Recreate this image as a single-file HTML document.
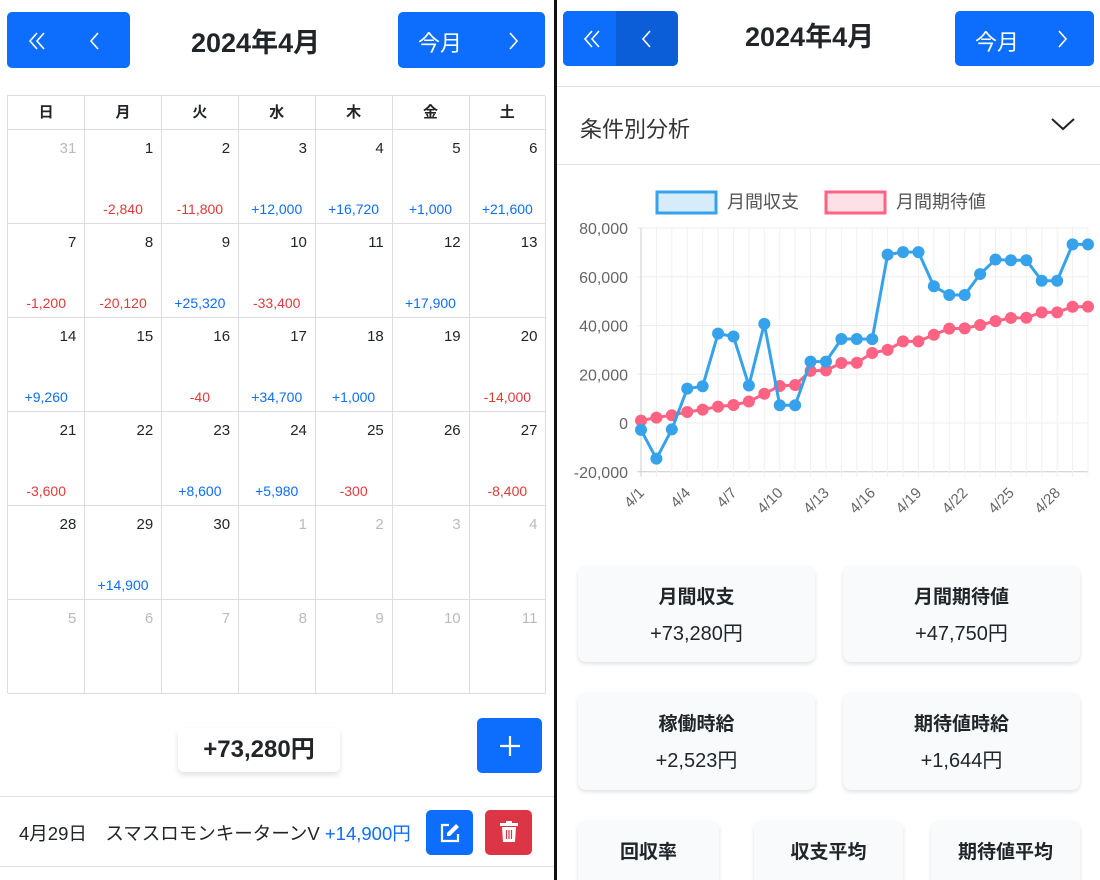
<!DOCTYPE html>
<html><head><meta charset="utf-8">
<style>
*{box-sizing:border-box;margin:0;padding:0}
html,body{width:1100px;height:880px;overflow:hidden}
body{background:#fff;font-family:"Liberation Sans","Noto Sans CJK JP",sans-serif;color:#212529;position:relative}
.a{position:absolute}
.btn{background:#0d6efd;border-radius:5px;color:#fff}
.cell{position:absolute;border-right:1px solid #dcdce4;border-bottom:1px solid #dcdce4}
.dn{position:absolute;right:8px;top:10px;font-size:15px}
.am{position:absolute;left:0;right:0;bottom:6px;text-align:center;font-size:14px}
.card{position:absolute;background:#f9fafb;border-radius:8px;box-shadow:0 2px 4px rgba(0,0,0,.12);text-align:center}
.card .t{font-size:19px;font-weight:bold;margin-top:16px}
.card .v{font-size:20px;margin-top:8px}
</style></head><body>
<!-- left -->
<div class="a btn" style="left:7px;top:12px;width:123px;height:56px"></div>
<svg class="a" style="left:26px;top:30px" width="24" height="22" viewBox="0 0 24 22"><path d="M11 3L4 11l7 8M18 3l-7 8 7 8" stroke="#fff" stroke-width="1.6" fill="none"/></svg>
<svg class="a" style="left:88px;top:30px" width="14" height="22" viewBox="0 0 14 22"><path d="M10 3L3 11l7 8" stroke="#fff" stroke-width="1.6" fill="none"/></svg>
<div class="a" style="left:191px;top:21px;font-size:27px;font-weight:bold">2024年4月</div>
<div class="a btn" style="left:398px;top:12px;width:147px;height:56px"></div>
<div class="a" style="left:418px;top:26px;font-size:22px;color:#fff">今月</div>
<svg class="a" style="left:506px;top:30px" width="14" height="22" viewBox="0 0 14 22"><path d="M4 3l7 8-7 8" stroke="#fff" stroke-width="1.6" fill="none"/></svg>
<div id="cal" class="a" style="left:7px;top:95px;width:538px;height:598px;border-left:1px solid #dcdce4;border-top:1px solid #dcdce4"></div>
<div class="a" style="left:178px;top:728px;width:162px;height:44px;border-radius:6px;box-shadow:0 3px 6px rgba(0,0,0,.12);background:#fff;text-align:center;font-size:24px;line-height:44px;font-weight:600">+73,280円</div>
<div class="a btn" style="left:477px;top:718px;width:65px;height:55px"></div>
<svg class="a" style="left:498px;top:734px" width="24" height="24"><path d="M12 2v20M2 12h20" stroke="#fff" stroke-width="2.2"/></svg>
<div class="a" style="left:0;top:796px;width:554px;height:1px;background:#e0e0e6"></div>
<div class="a" style="left:0;top:866px;width:554px;height:1px;background:#e0e0e6"></div>
<div class="a" style="left:19px;top:820px;font-size:18.5px;white-space:nowrap">4月29日　スマスロモンキーターンV <span style="color:#0d6efd">+14,900円</span></div>
<div class="a btn" style="left:426px;top:810px;width:47px;height:45px"></div>
<svg class="a" style="left:439px;top:822px" width="22" height="22" viewBox="0 0 22 22"><path d="M10 3H3v16h16v-7" stroke="#fff" stroke-width="2.2" fill="none"/><path d="M17 2l3 3-9 9H8v-3z" fill="#fff"/></svg>
<div class="a" style="left:485px;top:810px;width:47px;height:45px;background:#dc3545;border-radius:5px"></div>
<svg class="a" style="left:498px;top:820px" width="22" height="24" viewBox="0 0 22 24"><rect x="2" y="3" width="18" height="3" fill="#fff"/><rect x="8" y="1" width="6" height="3" fill="#fff"/><path d="M4 7h14l-1 15H5z" fill="#fff"/><path d="M8.5 10v9M11 10v9M13.5 10v9" stroke="#dc3545" stroke-width="1.2"/></svg>
<div class="a" style="left:554px;top:0;width:3px;height:880px;background:#111"></div>
<!-- right -->
<div class="a" style="left:563px;top:11px;width:115px;height:55px;background:#0b5ed7;border-radius:5px"></div>
<div class="a" style="left:563px;top:11px;width:53px;height:55px;background:#0d6efd;border-radius:5px 0 0 5px"></div>
<svg class="a" style="left:581px;top:28px" width="24" height="22" viewBox="0 0 24 22"><path d="M11 3L4 11l7 8M18 3l-7 8 7 8" stroke="#fff" stroke-width="1.6" fill="none"/></svg>
<svg class="a" style="left:640px;top:28px" width="14" height="22" viewBox="0 0 14 22"><path d="M10 3L3 11l7 8" stroke="#fff" stroke-width="1.6" fill="none"/></svg>
<div class="a" style="left:745px;top:15px;font-size:27px;font-weight:bold">2024年4月</div>
<div class="a btn" style="left:955px;top:11px;width:139px;height:55px"></div>
<div class="a" style="left:975px;top:25px;font-size:22px;color:#fff">今月</div>
<svg class="a" style="left:1055px;top:28px" width="14" height="22" viewBox="0 0 14 22"><path d="M4 3l7 8-7 8" stroke="#fff" stroke-width="1.6" fill="none"/></svg>
<div class="a" style="left:557px;top:86px;width:543px;height:1px;background:#e0e0e6"></div>
<div class="a" style="left:557px;top:164px;width:543px;height:1px;background:#e0e0e6"></div>
<div class="a" style="left:580px;top:112px;font-size:22px;color:#333">条件別分析</div>
<svg class="a" style="left:1050px;top:116px" width="26" height="16"><path d="M2 3l11 10L24 3" stroke="#222" stroke-width="2" fill="none"/></svg>
<svg id="ch" class="a" style="left:557px;top:180px" width="543" height="360"></svg>
<div class="card" style="left:578px;top:566px;width:237px;height:96px"><div class="t">月間収支</div><div class="v">+73,280円</div></div>
<div class="card" style="left:843px;top:566px;width:237px;height:96px"><div class="t">月間期待値</div><div class="v">+47,750円</div></div>
<div class="card" style="left:578px;top:693px;width:237px;height:97px"><div class="t">稼働時給</div><div class="v">+2,523円</div></div>
<div class="card" style="left:843px;top:693px;width:237px;height:97px"><div class="t">期待値時給</div><div class="v">+1,644円</div></div>
<div class="card" style="left:578px;top:821px;width:141px;height:80px"><div class="t">回収率</div></div>
<div class="card" style="left:754px;top:821px;width:149px;height:80px"><div class="t">収支平均</div></div>
<div class="card" style="left:931px;top:821px;width:149px;height:80px"><div class="t">期待値平均</div></div>
<script>
var cal=document.getElementById('cal'),h='';
var cw=538/7, hd=['日','月','火','水','木','金','土'];
for(var i=0;i<7;i++)h+='<div class="cell" style="left:'+(i*cw)+'px;top:0;width:'+(cw+0.5)+'px;height:34px;text-align:center;font-weight:bold;font-size:15px;line-height:33px">'+hd[i]+'</div>';
var amt={1:-2840,2:-11800,3:12000,4:16720,5:1000,6:21600,7:-1200,8:-20120,9:25320,10:-33400,12:17900,14:9260,16:-40,17:34700,18:1000,20:-14000,21:-3600,23:8600,24:5980,25:-300,27:-8400,29:14900};
function f(v){return (v>0?'+':'-')+Math.abs(v).toLocaleString('en-US')}
for(var r=0;r<6;r++)for(var c=0;c<7;c++){var k=r*7+c,d=k,o=false;
if(k==0){d=31;o=true}else if(k>30){d=k-30;o=true}
var s='<div class="cell" style="left:'+(c*cw)+'px;top:'+(34+r*94)+'px;width:'+(cw+0.5)+'px;height:94px"><div class="dn" style="color:'+(o?'#bbb':'#212529')+'">'+d+'</div>';
if(!o&&amt[d]!==undefined)s+='<div class="am" style="color:'+(amt[d]>0?'#0d6efd':'#e03a3a')+'">'+f(amt[d])+'</div>';
h+=s+'</div>'}
cal.innerHTML=h;
var B=[-2840,-14640,-2640,14080,15080,36680,35480,15360,40680,7280,7280,25180,25180,34440,34440,34400,69100,70100,70100,56100,52500,52500,61100,67080,66780,66780,58380,58380,73280,73280];
var R=[1000,2200,3200,4500,5500,6700,7400,8800,12000,15200,15600,21400,21600,24600,24700,28700,30000,33500,33500,36200,38700,38800,40200,41800,43100,43200,45400,45400,47700,47750];
var X0=84,DX=(531-84)/29,Y0=243,K=48.75/20000,g='';
function Y(v){return Y0-v*K}
for(var v=-20000;v<=80000;v+=20000){g+='<line x1="'+(X0-4)+'" x2="531" y1="'+Y(v)+'" y2="'+Y(v)+'" stroke="'+(v==-20000?'#ccc':'#eee')+'"/><text x="'+(X0-13)+'" y="'+(Y(v)+6)+'" text-anchor="end" font-size="16" fill="#666">'+v.toLocaleString('en-US')+'</text>'}
for(var i=0;i<30;i++){var x=X0+i*DX;g+='<line x1="'+x+'" x2="'+x+'" y1="48" y2="'+(Y(-20000)+5)+'" stroke="'+(i==0?'#ccc':'#f0f0f0')+'"/>';
if(i%3==0)g+='<text transform="translate('+(x+4)+','+(Y(-20000)+22)+') rotate(-45)" text-anchor="end" font-size="15" fill="#666">4/'+(i+1)+'</text>'}
function ser(a,col){var p=a.map(function(v,i){return (X0+i*DX)+','+Y(v)}).join(' ');var s='<polyline points="'+p+'" fill="none" stroke="'+col+'" stroke-width="3"/>';a.forEach(function(v,i){s+='<circle cx="'+(X0+i*DX)+'" cy="'+Y(v)+'" r="6" fill="'+col+'"/>'});return s}
g+=ser(R,'#ff6384')+ser(B,'#36a2eb');
g+='<rect x="100" y="12" width="59" height="21" fill="#d7ecfb" stroke="#36a2eb" stroke-width="3"/><text x="170" y="28" font-size="18" fill="#555">月間収支</text>';
g+='<rect x="269" y="12" width="59" height="21" fill="#ffe0e6" stroke="#ff6384" stroke-width="3"/><text x="339" y="28" font-size="18" fill="#555">月間期待値</text>';
document.getElementById('ch').innerHTML=g;
</script>
</body></html>
